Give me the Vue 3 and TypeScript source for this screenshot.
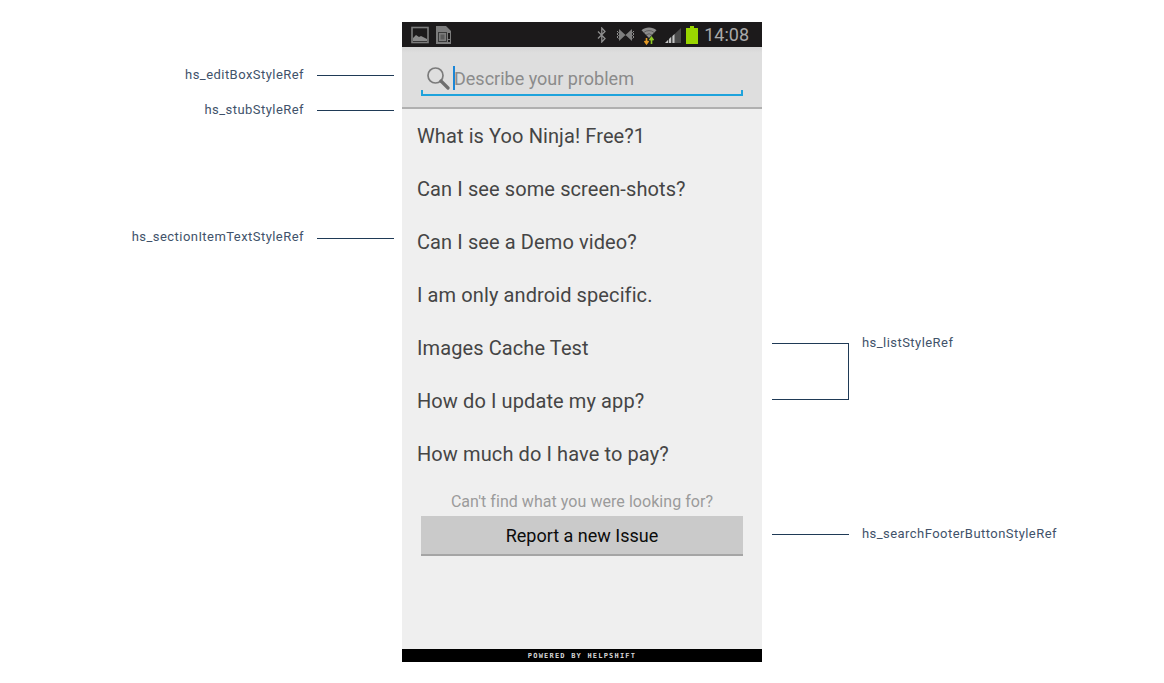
<script setup lang="ts">
const items: string[] = [
  'What is Yoo Ninja! Free?1',
  'Can I see some screen-shots?',
  'Can I see a Demo video?',
  'I am only android specific.',
  'Images Cache Test',
  'How do I update my app?',
  'How much do I have to pay?',
]
</script>

<template>
  <div class="page">
    <div class="phone">
      <div class="status">
        <svg class="notif" width="18" height="18" viewBox="0 0 18 18">
          <rect x="1" y="1.5" width="16" height="15" fill="none" stroke="#7c7c7c" stroke-width="1.6" />
          <path d="M2 15v-3l3-3 3 2 2-1 4 2 2 1v2z" fill="#8a8a8a" />
        </svg>
        <svg class="notif" width="18" height="20" viewBox="0 0 18 20">
          <path d="M1 1h10l5 5v13H1z" fill="#7c7c7c" />
          <rect x="3.500" y="7.500" width="8" height="9" fill="none" stroke="#3a3a3a" stroke-width="1" />
          <rect x="5.500" y="9.500" width="4" height="5" fill="#5a5a5a" />
          <rect x="13" y="8" width="2" height="6" fill="#1c1a1b" />
          <rect x="13" y="15" width="2" height="2" fill="#1c1a1b" />
        </svg>
        <div class="spacer"></div>
        <svg class="st-bt" width="9" height="16" viewBox="0 0 9 16">
          <path d="M1 4.500l7 7-3.200 3.500V1L8 4.500l-7 7" fill="none" stroke="#8e8e8e" stroke-width="1.300" />
        </svg>
        <svg class="st-vib" width="19" height="14" viewBox="0 0 19 14">
          <path d="M3 1l13 12V1L3 13z" fill="#7e7e7e" />
          <path d="M1 3l1.500 1.500L1 6l1.500 1.500L1 9l1.500 1.500M18 3l-1.500 1.500L18 6l-1.500 1.500L18 9l-1.500 1.500" fill="none" stroke="#8e8e8e" stroke-width="1" />
        </svg>
        <svg class="st-wifi" width="16" height="20" viewBox="0 0 16 20">
          <path d="M.5 5.200C4.500 1.600 11.500 1.600 15.500 5.200L8 13z" fill="#8c8c8c" />
          <path d="M2.800 7.500a8 8 0 0 1 10.400 0" fill="none" stroke="#4a4a4a" stroke-width="0.700" />
          <path d="M5 10a4.500 4.500 0 0 1 6 0" fill="none" stroke="#4a4a4a" stroke-width="0.700" />
          <path d="M5.500 13v5.500M3.500 16l2 2.800 2-2.800" fill="none" stroke="#e59a24" stroke-width="1.600" />
          <path d="M10.500 19v-6.500M8.500 15.300l2-2.800 2 2.800" fill="none" stroke="#8fc926" stroke-width="1.600" />
        </svg>
        <svg class="st-sig" width="18" height="16" viewBox="0 0 18 16">
          <path d="M1 15L17 0v15z" fill="#4a4a4a" />
          <path d="M1 15l3-3v3zM5 15v-4l2-2v6zM8.500 15V8l2-2v9z" fill="#c4c4c4" />
        </svg>
        <svg class="st-bat" width="12" height="18" viewBox="0 0 12 18">
          <path d="M4 0h4v2h4v16H0V2h4z" fill="#9ad600" />
        </svg>
        <span class="clock">14:08</span>
      </div>

      <div class="search">
        <div class="field">
          <svg class="glass" width="24" height="24" viewBox="0 0 24 24">
            <circle cx="9.500" cy="9.500" r="7.500" fill="none" stroke="#7b7b7b" stroke-width="1.700" />
            <path d="M15 15l7 7" stroke="#6e6e6e" stroke-width="3.200" stroke-linecap="round" />
          </svg>
          <span class="caret"></span>
          <span class="placeholder">Describe your problem</span>
        </div>
      </div>

      <ul class="list">
        <li v-for="item in items" :key="item" class="row">{{ item }}</li>
      </ul>

      <p class="prompt">Can't find what you were looking for?</p>
      <div class="report">Report a new Issue</div>

      <div class="grow"></div>
      <div class="powered">POWERED BY HELPSHIFT</div>
    </div>

    <span class="label left" style="top: 67px">hs_editBoxStyleRef</span>
    <i class="line" style="left: 317px; top: 75px; width: 77px"></i>
    <span class="label left" style="top: 102px">hs_stubStyleRef</span>
    <i class="line" style="left: 317px; top: 110px; width: 77px"></i>
    <span class="label left" style="top: 229px">hs_sectionItemTextStyleRef</span>
    <i class="line" style="left: 317px; top: 238px; width: 77px"></i>

    <div class="bracket"></div>
    <span class="label right" style="top: 335px">hs_listStyleRef</span>
    <i class="line" style="left: 772px; top: 534px; width: 77px"></i>
    <span class="label right" style="top: 526px">hs_searchFooterButtonStyleRef</span>
  </div>
</template>

<style>
html, body { background: #fff; }
</style>

<style scoped>
.page {
  position: relative;
  height: 683px;
  width: 1164px;
  overflow: hidden;
  background: #fff;
  padding: 22px 0 0 402px;
  box-sizing: border-box;
  font-family: Roboto, sans-serif;
}
.phone {
  width: 360px;
  height: 640px;
  background: #efefef;
  display: flex;
  flex-direction: column;
}
.status {
  height: 25px;
  flex: none;
  background: #1c1a1b;
  display: flex;
  align-items: center;
  padding: 0 13px 0 9px;
  box-sizing: border-box;
}
.notif { margin-right: 6px; }
.spacer { flex: 1; }
.st-bt { margin-right: 10px; }
.st-vib { margin-right: 6px; }
.st-wifi { margin-right: 7px; }
.st-sig { margin-right: 4px; margin-top: 3px; }
.st-bat { margin-right: 6px; }
.clock {
  color: #a9a9a9;
  font-size: 18px;
  line-height: 25px;
}
.search {
  flex: none;
  height: 62px;
  box-sizing: border-box;
  background: linear-gradient(#d6d6d6, #dedede 6px);
  border-bottom: 2px solid #b0b0b0;
  padding: 0 19px;
}
.field {
  height: 49px;
  box-sizing: border-box;
  display: flex;
  align-items: center;
  padding: 15px 0 0 5px;
  border-bottom: 2px solid #1fa3dc;
  position: relative;
}
.field::before, .field::after {
  content: '';
  position: absolute;
  bottom: 0;
  width: 2px;
  height: 4px;
  background: #1fa3dc;
}
.field::before { left: 0; }
.field::after { right: 0; }
.glass { flex: none; margin-right: 3px; }
.caret {
  width: 2px;
  height: 24px;
  background: #1a86d8;
  flex: none;
  margin-right: -1px;
}
.placeholder {
  color: #8b8b8b;
  font-size: 18px;
}
.list {
  list-style: none;
  margin: 1px 0 0;
  padding: 0 0 0 15px;
}
.row {
  height: 53px;
  line-height: 53px;
  font-size: 20px;
  letter-spacing: 0.1px;
  color: #454545;
  white-space: nowrap;
}
.prompt {
  margin: 9px 0 0;
  height: 24px;
  line-height: 24px;
  text-align: center;
  font-size: 16px;
  letter-spacing: 0.05px;
  color: #9b9b9b;
}
.report {
  flex: none;
  height: 40px;
  margin: 2px 19px 0;
  box-sizing: border-box;
  background: #cacaca;
  border-bottom: 2px solid #a5a5a5;
  color: #0c0c0c;
  font-size: 18px;
  line-height: 40px;
  text-align: center;
}
.grow { flex: 1; }
.powered {
  flex: none;
  height: 13px;
  background: #000;
  color: #d6d6d6;
  font-family: "DejaVu Sans Mono", monospace;
  font-weight: 700;
  font-size: 7px;
  letter-spacing: 1.2px;
  line-height: 14px;
  text-align: center;
}
.label {
  position: absolute;
  font-family: Roboto, sans-serif;
  font-size: 13px;
  line-height: 15px;
  color: #41526a;
  white-space: nowrap;
  letter-spacing: 0.45px;
}
.label.left { right: 860px; }
.label.right { left: 862px; }
.line {
  position: absolute;
  height: 1px;
  background: #1f3a56;
}
.bracket {
  position: absolute;
  left: 772px;
  top: 343px;
  width: 76px;
  height: 55px;
  border: 1px solid #1f3a56;
  border-left: none;
}
</style>
